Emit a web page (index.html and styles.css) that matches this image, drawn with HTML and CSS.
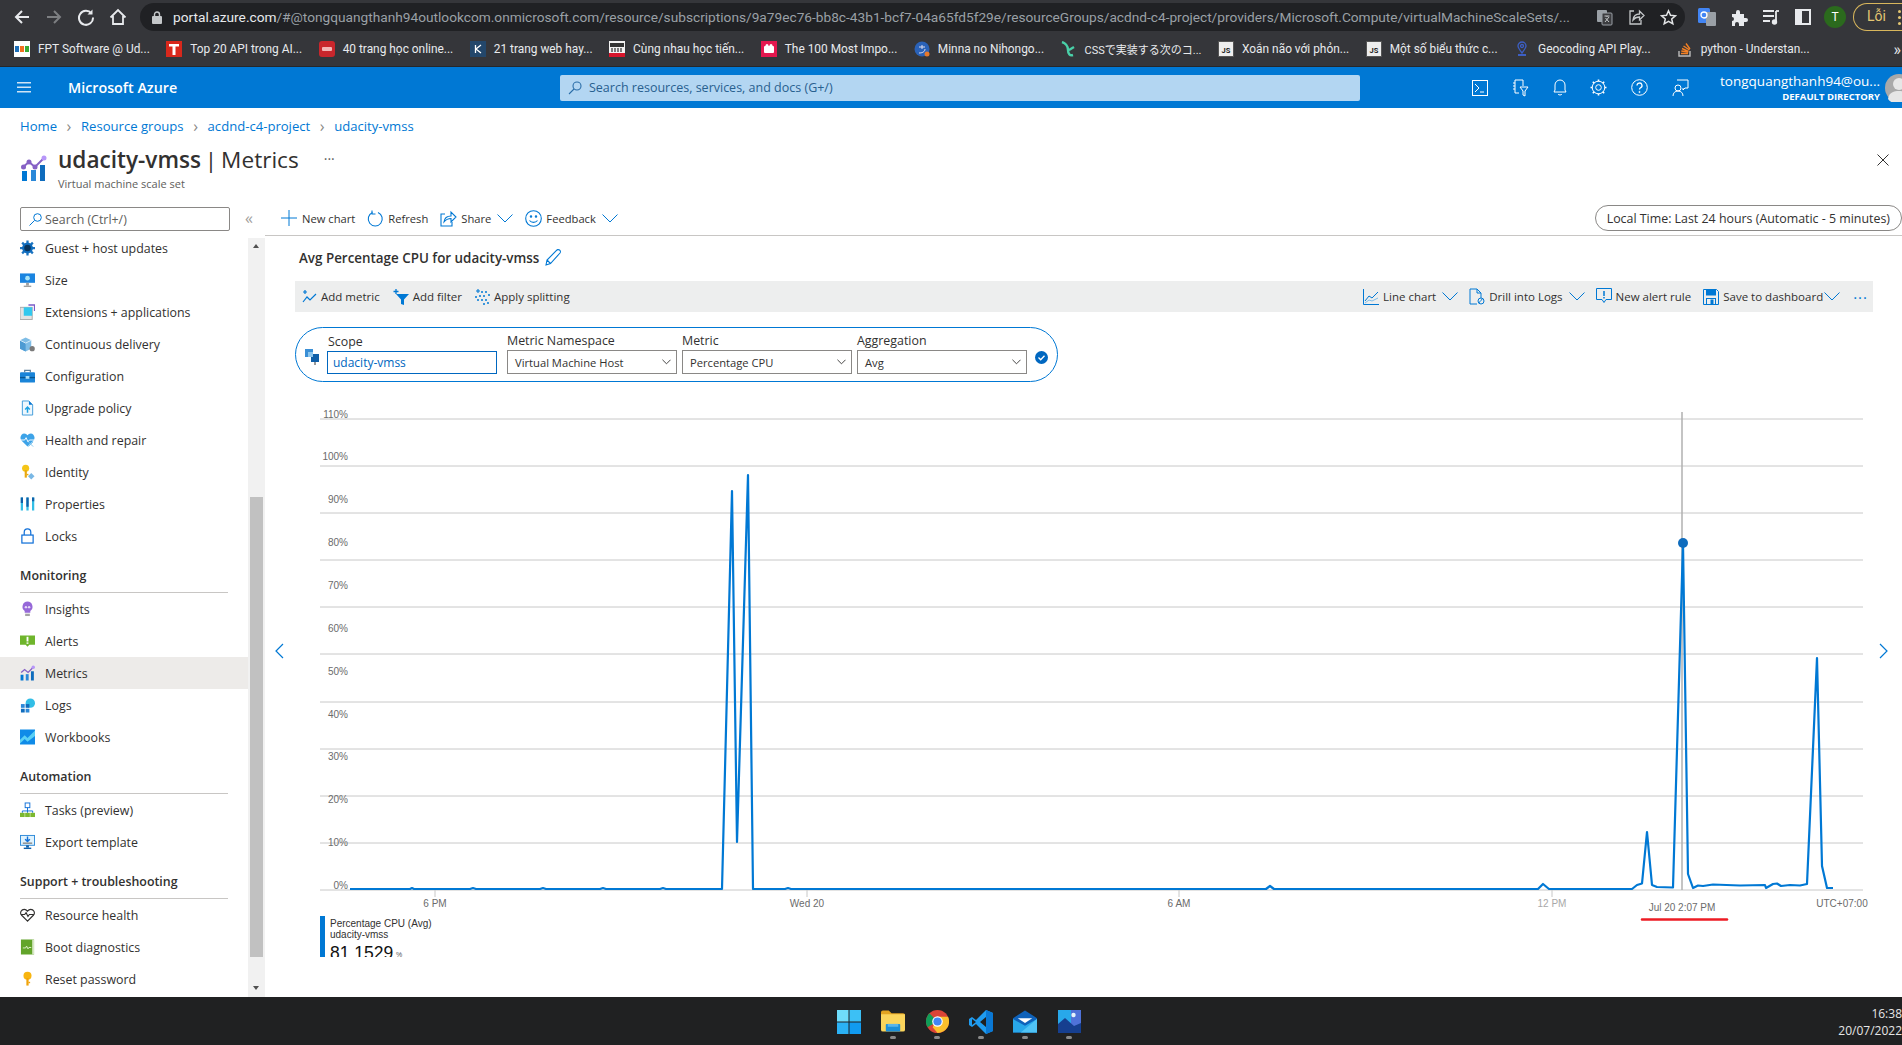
FILE: index.html
```html
<!DOCTYPE html>
<html lang="en">
<head>
    <meta charset="UTF-8">
    <title>udacity-vmss | Metrics - Microsoft Azure</title>
    <link rel="stylesheet" href="styles.css">
</head>
<body>

<!-- browser toolbar -->
<div class="browser-bar">
    <div class="nav-btn"><svg width="18" height="18" viewBox="0 0 18 18" fill="none" stroke="#e8eaed" stroke-width="2"><path d="M16 9H3M9 3 3 9l6 6"/></svg></div>
    <div class="nav-btn"><svg width="18" height="18" viewBox="0 0 18 18" fill="none" stroke="#7d7f82" stroke-width="2"><path d="M2 9h13M9 3l6 6-6 6"/></svg></div>
    <div class="nav-btn"><svg width="18" height="18" viewBox="0 0 18 18" fill="none" stroke="#e8eaed" stroke-width="2"><path d="M14.5 5.5A7 7 0 1 0 16 9.5"/><path d="M15.5 1.500v5h-5" fill="#e8eaed" stroke="none"/></svg></div>
    <div class="nav-btn"><svg width="18" height="18" viewBox="0 0 18 18" fill="none" stroke="#e8eaed" stroke-width="1.800"><path d="M1.500 9.500 9 2l7.500 7.500M4 8v8h10V8"/></svg></div>
    <div class="address">
        <svg class="lock" width="10" height="13" viewBox="0 0 10 13" fill="#c4c7c9"><rect y="5" width="10" height="8" rx="1"/><path d="M2.500 5V3.500a2.500 2.500 0 0 1 5 0V5" fill="none" stroke="#c4c7c9" stroke-width="1.400"/></svg>
        <div class="url"><span class="url-host">portal.azure.com</span>/#@tongquangthanh94outlookcom.onmicrosoft.com/resource/subscriptions/9a79ec76-bb8c-43b1-bcf7-04a65fd5f29e/resourceGroups/acdnd-c4-project/providers/Microsoft.Compute/virtualMachineScaleSets/...</div>
        <svg class="addr-icon" width="17" height="17" viewBox="0 0 17 17"><rect x="1" y="1" width="10" height="12" rx="1" fill="#9aa0a6"/><rect x="6" y="4" width="10" height="12" rx="1" fill="#3c3d40" stroke="#9aa0a6"/><path d="M8.500 7h5M11 7v1M9 13l4-5M9.500 9l3.500 4" stroke="#c4c7c9" fill="none"/></svg>
        <svg class="addr-icon" width="17" height="17" viewBox="0 0 17 17" fill="none" stroke="#c4c7c9" stroke-width="1.300"><path d="M6 2H2v13h11v-4"/><path d="M5 11c.5-4 3-6 6.500-6V2L16 6.500 11.500 11V8C9 8 6.500 9 5 11Z"/></svg>
        <svg class="addr-icon" width="17" height="17" viewBox="0 0 17 17" fill="none" stroke="#e3e5e7" stroke-width="1.500"><path d="m8.500 1.800 2 4.500 4.900.5-3.700 3.200 1.100 4.800-4.300-2.500-4.300 2.500 1.100-4.800L1.600 6.800l4.900-.5Z"/></svg>
    </div>
    <div class="ext-btn ext-first"><svg width="20" height="20" viewBox="0 0 20 20"><rect x="1" y="1" width="12" height="15" rx="1.500" fill="#4285f4"/><rect x="9" y="5" width="10" height="14" rx="1" fill="#9aa0a6"/><circle cx="7" cy="8" r="3" fill="none" stroke="#fff" stroke-width="1.300"/></svg></div>
    <div class="ext-btn"><svg width="18" height="18" viewBox="0 0 18 18" fill="#e8eaed"><path d="M2 6h4V4a2 2 0 0 1 4 0v2h4v4h2a2 2 0 0 1 0 4h-2v4H9v-2a2 2 0 0 0-4 0v2H2v-5a2 2 0 0 0 0-4Z"/></svg></div>
    <div class="ext-btn"><svg width="18" height="18" viewBox="0 0 18 18" fill="none" stroke="#e8eaed" stroke-width="1.800"><path d="M1 3h11M1 8h11M1 13h7M14 3v11"/><circle cx="12.500" cy="14" r="1.800" fill="#e8eaed"/><path d="M14 3h3"/></svg></div>
    <div class="ext-btn"><svg width="16" height="16" viewBox="0 0 16 16"><rect width="16" height="16" fill="#e8eaed"/><rect x="7" y="2" width="7" height="12" fill="#35363a"/></svg></div>
    <div class="ext-btn"><div class="profile">T</div></div>
    <div class="error-pill">Lỗi<span class="error-dots"></span></div>
</div>

<!-- bookmarks -->
<div class="bookmarks">
    <div class="bookmark"><svg class="fav" viewBox="0 0 16 16"><rect width="16" height="16" fill="#fff"/><rect x="1" y="5" width="4" height="6" fill="#1d6fb8"/><rect x="6" y="5" width="4" height="6" fill="#f37021"/><rect x="11" y="5" width="4" height="6" fill="#3aaa35"/></svg>FPT Software @ Ud...</div>
    <div class="bookmark"><svg class="fav" viewBox="0 0 16 16"><rect width="16" height="16" fill="#d8281c"/><path d="M3 3h10v2.500H9.500V14h-3V5.500H3Z" fill="#fff"/></svg>Top 20 API trong AI...</div>
    <div class="bookmark"><svg class="fav" viewBox="0 0 16 16"><rect width="16" height="16" rx="3" fill="#c9262c"/><rect x="3" y="6" width="10" height="4" rx="1" fill="#f3b5b5"/></svg>40 trang học online...</div>
    <div class="bookmark"><svg class="fav" viewBox="0 0 16 16"><rect width="16" height="16" fill="#23476b"/><path d="M5.500 4v8M11 4 6 8l5 4" fill="none" stroke="#fff" stroke-width="1.300"/></svg>21 trang web hay...</div>
    <div class="bookmark"><svg class="fav" viewBox="0 0 16 16"><rect width="16" height="16" fill="#f2f2f2"/><path d="M1 2h14v4H1Z" fill="#333"/><path d="M3 7v4M6 7v4M9 7v4M12 7v4" stroke="#555" stroke-width="1.500"/><rect y="12" width="16" height="4" fill="#d8162c"/></svg>Cùng nhau học tiến...</div>
    <div class="bookmark"><svg class="fav" viewBox="0 0 16 16"><rect width="16" height="16" fill="#e3174e"/><rect x="3" y="5" width="10" height="7" rx="1" fill="#fff"/><circle cx="6" cy="4.500" r="1.500" fill="#fff"/><circle cx="10" cy="4.500" r="1.500" fill="#fff"/></svg>The 100 Most Impo...</div>
    <div class="bookmark"><svg class="fav" viewBox="0 0 16 16"><circle cx="8" cy="8" r="7.500" fill="#2a62b8"/><circle cx="13" cy="13" r="2.500" fill="#e8792a"/><path d="M5 6h6M8 4v4M5 12c3 0 6-1 6-4" stroke="#dde" fill="none"/></svg>Minna no Nihongo...</div>
    <div class="bookmark"><svg class="fav" viewBox="0 0 16 16" fill="none" stroke="#49d0a8" stroke-width="2.400"><path d="M1 1c3 1 6 4 6 8s2 6 5 5M8 9l5-3"/></svg><span class="cjk-label">CSSで実装する次のコ...</span></div>
    <div class="bookmark"><svg class="fav" viewBox="0 0 16 16"><rect x=".5" y=".5" width="15" height="15" fill="#eee" stroke="#555"/><text x="8" y="12" class="js-mark">JS</text></svg>Xoắn não với phỏn...</div>
    <div class="bookmark"><svg class="fav" viewBox="0 0 16 16"><rect x=".5" y=".5" width="15" height="15" fill="#eee" stroke="#555"/><text x="8" y="12" class="js-mark">JS</text></svg>Một số biểu thức c...</div>
    <div class="bookmark bookmark-gap"><svg class="fav" viewBox="0 0 16 16" fill="none" stroke="#3d5fc4" stroke-width="1.300"><path d="M8 12C5 8 4 6.500 4 5a4 4 0 0 1 8 0c0 1.500-1 3-4 7Z"/><circle cx="8" cy="5" r="1.500"/><path d="M4 14h8" stroke-width="2"/></svg>Geocoding API Play...</div>
    <div class="bookmark"><svg class="fav" viewBox="0 0 16 16" fill="none" stroke-width="1.400"><path d="M2 10v5h11v-5" stroke="#bcbbbb"/><path d="M4 12.500h7M4.300 10l7 1M5 7.500l6.500 2.800M6.500 5l6 4M9 2.500l4 5.500" stroke="#f48024"/></svg>python - Understan...</div>
    <div class="more-bookmarks">»</div>
</div>

<!-- azure header -->
<header class="azure-bar">
    <svg class="hamburger" width="14" height="11" viewBox="0 0 14 11" fill="#cfe4f5"><rect width="14" height="1.500"/><rect y="4.500" width="14" height="1.500"/><rect y="9" width="14" height="1.500"/></svg>
    <div class="azure-brand">Microsoft Azure</div>
    <div class="global-search">
        <svg width="14" height="14" viewBox="0 0 14 14" fill="none" stroke="#2b6ea8" stroke-width="1.100"><circle cx="9" cy="5" r="4"/><path d="M6 8l-5 5"/></svg>
        Search resources, services, and docs (G+/)
    </div>
    <div class="azure-icons">
        <svg width="16" height="16" viewBox="0 0 16 16" fill="none" stroke="#fff"><rect x=".5" y=".5" width="15" height="15"/><path d="m3 4 4 4-4 4M8 12h4"/></svg>
        <svg width="17" height="18" viewBox="0 0 17 18" fill="none" stroke="#fff"><path d="M3 1h8v6M3 1v13h4M1 4h2M1 7h2M1 10h2M8 8h8l-3 4v5l-2-1v-4Z"/></svg>
        <svg width="14" height="17" viewBox="0 0 14 17" fill="none" stroke="#fff"><path d="M1 13h12l-1-2V6a5 5 0 0 0-10 0v5ZM5 15c.5 1.300 3.500 1.300 4 0"/></svg>
        <svg width="17" height="17" viewBox="0 0 17 17" fill="none" stroke="#fff"><circle cx="8.500" cy="8.500" r="2.800"/><circle cx="8.500" cy="8.500" r="6.300" stroke-width="1"/><path d="M8.500 .5v2M8.500 14.500v2M.5 8.500h2M14.500 8.500h2M2.800 2.800l1.500 1.500M12.700 12.700l1.500 1.500M2.800 14.200l1.500-1.500M12.700 4.300l1.500-1.500" stroke-width="1.600"/></svg>
        <svg width="17" height="17" viewBox="0 0 17 17" fill="none" stroke="#fff"><circle cx="8.500" cy="8.500" r="7.800"/><path d="M6 6.500a2.500 2.500 0 1 1 3.500 2.300c-.7.400-1 .8-1 1.700" stroke-width="1.300"/><circle cx="8.500" cy="13" r=".6"/></svg>
        <svg width="17" height="18" viewBox="0 0 17 18" fill="none" stroke="#fff"><path d="M5 1h11v8h-3l-2 2V9"/><circle cx="6" cy="9" r="3"/><path d="M1 17c0-3 2-5 5-5s5 2 5 5"/></svg>
    </div>
    <div class="account">
        <div class="account-name">tongquangthanh94@ou...</div>
        <div class="account-dir">DEFAULT DIRECTORY</div>
    </div>
    <svg class="avatar" width="28" height="28" viewBox="0 0 28 28"><circle cx="14" cy="14" r="14" fill="#a9a9a9"/><circle cx="14" cy="10" r="6" fill="#e6e6e6"/><path d="M3 25c1-7 6-8 11-8s10 1 11 8a14 14 0 0 1-22 0Z" fill="#e6e6e6"/></svg>
</header>

<nav class="breadcrumbs">
    <a>Home</a><span class="crumb-sep">›</span><a>Resource groups</a><span class="crumb-sep">›</span><a>acdnd-c4-project</a><span class="crumb-sep">›</span><a>udacity-vmss</a>
</nav>

<div class="page-title">
    <svg class="title-icon" viewBox="0 0 26 26"><path d="M2 12 8 7l6 5 9-9" fill="none" stroke="#8661c5" stroke-width="2"/><circle cx="2.500" cy="12" r="2.500" fill="#8661c5"/><circle cx="8" cy="7" r="2.500" fill="#8661c5"/><circle cx="14" cy="12" r="2.500" fill="#8661c5"/><circle cx="23" cy="3" r="2.500" fill="#b796f9"/><rect x="1" y="16" width="5" height="10" fill="#0078d4"/><rect x="10" y="15" width="5" height="11" fill="#2b88d8"/><rect x="19" y="10" width="5" height="16" fill="#0f6cbd"/></svg>
    <div class="title-text">
        <h1><b>udacity-vmss</b> | Metrics</h1>
        <div class="subtitle">Virtual machine scale set</div>
    </div>
    <div class="title-more">···</div>
    <svg class="close-x" width="12" height="12" viewBox="0 0 12 12" stroke="#323130"><path d="m.5.500 11 11M11.500.500l-11 11"/></svg>
</div>

<div class="main">
    <aside class="sidebar">
        <div class="side-search-row">
            <div class="side-search">
                <svg width="13" height="13" viewBox="0 0 13 13" fill="none" stroke="#0078d4"><circle cx="8.500" cy="4.500" r="3.800"/><path d="M5.500 7.500l-5 5"/></svg>
                Search (Ctrl+/)
            </div>
            <div class="collapse">«</div>
        </div>
        <div class="side-body">
            <div class="menu">
                <a class="menu-item"><svg class="menu-icon" viewBox="0 0 16 16"><path d="M8 0v16M0 8h16M2.300 2.300l11.400 11.400M13.700 2.300 2.300 13.700" stroke="#1a73c0" stroke-width="2.400"/><circle cx="8" cy="8" r="5.800" fill="#0f6cbd"/><circle cx="8" cy="8" r="3.500" fill="#08345c"/></svg>Guest + host updates</a>
                <a class="menu-item"><svg class="menu-icon" viewBox="0 0 16 16"><rect y="1" width="16" height="10" fill="#1a84e0"/><circle cx="8" cy="6" r="2.500" fill="#a6e4f7"/><rect x="6.500" y="11" width="3" height="3" fill="#a0a0a0"/><rect x="4" y="14" width="8" height="1.500" fill="#a0a0a0"/></svg>Size</a>
                <a class="menu-item"><svg class="menu-icon" viewBox="0 0 16 16"><rect x="0" y="3" width="13" height="13" fill="#e3e3e3" stroke="#a8a8a8"/><rect x="4" y="3" width="9" height="9" fill="#32c8ee"/><path d="M9 .500h6.500V7" fill="none" stroke="#7b5cc9" stroke-width="1.400"/></svg>Extensions + applications</a>
                <a class="menu-item"><svg class="menu-icon" viewBox="0 0 16 16"><path d="M0 4l6-3 6 3v9l-6 3-6-3Z" fill="#7fbde6"/><path d="M6 7v9L0 13V4Z" fill="#4d9bd3"/><path d="M0 4l6 3 6-3" fill="none" stroke="#d7ecfa"/><circle cx="13" cy="13" r="2.800" fill="#7a7a7a"/></svg>Continuous delivery</a>
                <a class="menu-item"><svg class="menu-icon" viewBox="0 0 16 16"><rect y="4" width="16" height="11" rx="1" fill="#1a84d8"/><rect y="9" width="16" height="1.400" fill="#0a568f"/><path d="M5 4V2h6v2" fill="none" stroke="#5c7f9c" stroke-width="1.300"/><rect x="6" y="8" width="4" height="3" fill="#a7dcf6"/></svg>Configuration</a>
                <a class="menu-item"><svg class="menu-icon" viewBox="0 0 16 16"><path d="M2.500.500h7l4 4v11h-11Z" fill="#eef7fd" stroke="#3d9ad9"/><path d="M9.500.500v4h4" fill="#0a78d4"/><path d="M8 13V8M5.500 9.500 8 7l2.500 2.500" stroke="#1ba1e2" fill="none" stroke-width="1.600"/></svg>Upgrade policy</a>
                <a class="menu-item"><svg class="menu-icon" viewBox="0 0 16 16"><path d="M8 15 1.500 8.500C-1 5.500 1.500 1 4.500 1 6 1 7.300 2 8 3c.7-1 2-2 3.500-2 3 0 5.500 4.500 3 7.500Z" fill="#3da3e8"/><path d="M1 8h4l1.500-2.500L8.500 10l1.500-2h5" fill="none" stroke="#fff"/><path d="m9 10 5 5M14 10l-5 5" stroke="#7cc4ee"/></svg>Health and repair</a>
                <a class="menu-item"><svg class="menu-icon" viewBox="0 0 16 16"><circle cx="6" cy="4" r="3.800" fill="#f5c518"/><rect x="5" y="6" width="2.300" height="8" fill="#e8a80f"/><rect x="7" y="10" width="2" height="1.500" fill="#e8a80f"/><path d="m12 9 3.500 3.500L12 16l-3.500-3.500Z" fill="#7ab8e5"/></svg>Identity</a>
                <a class="menu-item"><svg class="menu-icon" viewBox="0 0 16 16"><path d="M2 1v14M8 1v14M14 1v14" stroke="#32bee6" stroke-width="2.400"/><path d="M2 1v6M8 1v10M14 1v4" stroke="#0f5fa8" stroke-width="2.400"/></svg>Properties</a>
                <a class="menu-item"><svg class="menu-icon" viewBox="0 0 16 16" fill="none" stroke="#0f6fd8" stroke-width="1.300"><rect x="2" y="7" width="12" height="8.500"/><path d="M4.500 7V4a3.500 3.500 0 0 1 7 0v3"/></svg>Locks</a>
            </div>
            <div class="menu-section">Monitoring</div>
            <div class="menu">
                <a class="menu-item"><svg class="menu-icon" viewBox="0 0 16 16"><path d="M8 0a5.500 5.500 0 0 1 3 10v2H5v-2A5.500 5.500 0 0 1 8 0Z" fill="#9668d8"/><rect x="5.500" y="13" width="5" height="2.500" fill="#a3a3a3"/><circle cx="6.300" cy="6" r="1.300" fill="#e5d8f7"/><circle cx="9.700" cy="6" r="1.300" fill="#e5d8f7"/></svg>Insights</a>
                <a class="menu-item"><svg class="menu-icon" viewBox="0 0 16 16"><path d="M0 2h16v10h-6l-2 2-2-2H0Z" fill="#6fb52c"/><rect x="7" y="3.500" width="2" height="5" fill="#fff"/><rect x="7" y="9.500" width="2" height="1.500" fill="#fff"/></svg>Alerts</a>
                <a class="menu-item active"><svg class="menu-icon" viewBox="0 0 26 26"><path d="M2 12 8 7l6 5 9-9" fill="none" stroke="#8661c5" stroke-width="2.400"/><circle cx="23" cy="3" r="3" fill="#b796f9"/><rect x="1" y="16" width="5" height="10" fill="#0078d4"/><rect x="10" y="15" width="5" height="11" fill="#2b88d8"/><rect x="19" y="10" width="5" height="16" fill="#0f6cbd"/></svg>Metrics</a>
                <a class="menu-item"><svg class="menu-icon" viewBox="0 0 16 16"><circle cx="11" cy="6" r="5" fill="#32bee6"/><rect x="1" y="7" width="4" height="4" fill="#2b88d8"/><rect x="6" y="7" width="4" height="4" fill="#0f6cbd"/><rect x="1" y="12" width="4" height="4" fill="#0f6cbd"/><rect x="6" y="12" width="4" height="4" fill="#2b88d8"/></svg>Logs</a>
                <a class="menu-item"><svg class="menu-icon" viewBox="0 0 16 16"><rect width="16" height="16" fill="#0f8be8"/><path d="M0 11 5 6l3 3 8-8v6l-8 6-3-3-5 5Z" fill="#5ad0f5"/></svg>Workbooks</a>
            </div>
            <div class="menu-section">Automation</div>
            <div class="menu">
                <a class="menu-item"><svg class="menu-icon" viewBox="0 0 16 16"><rect x="5.500" y=".5" width="5" height="5" fill="#fff" stroke="#0f6fd8"/><path d="M8 5.500V9M2.500 11V9h11v2M8 9v2" fill="none" stroke="#0f6fd8"/><rect y="11" width="5" height="4.500" fill="#7cb82f"/><rect x="5.500" y="11" width="5" height="4.500" fill="#7cb82f"/><rect x="11" y="11" width="5" height="4.500" fill="#7cb82f"/></svg>Tasks (preview)</a>
                <a class="menu-item"><svg class="menu-icon" viewBox="0 0 16 16"><rect x=".5" y="1" width="15" height="10.500" fill="#dff2fd" stroke="#2b88d8"/><path d="M8 2v5M5.500 5 8 7.500 10.500 5" fill="none" stroke="#0f6fd8" stroke-width="1.500"/><rect x="3" y="8.500" width="10" height="1.500" fill="#8a8a8a"/><rect x="6.500" y="11.500" width="3" height="2.500" fill="#0f5fa8"/><rect x="4" y="14" width="8" height="1.500" fill="#0f5fa8"/></svg>Export template</a>
            </div>
            <div class="menu-section">Support + troubleshooting</div>
            <div class="menu">
                <a class="menu-item"><svg class="menu-icon" viewBox="0 0 16 16" fill="none" stroke="#323130" stroke-width="1.200"><path d="M8 14.500 1.500 8C-.5 5.500 1.500 2 4.500 2 6 2 7.300 3 8 4c.7-1 2-2 3.500-2 3 0 5 3.500 3 6Z"/><path d="M1 7.500h4l1.500-2 2 4 1.500-2h5"/></svg>Resource health</a>
                <a class="menu-item"><svg class="menu-icon" viewBox="0 0 16 16"><rect x="1" y="0" width="14" height="16" fill="#62a42a"/><rect x="13" y="0" width="2" height="16" fill="#d7e8c5"/><path d="M3 9h3l1-2 1.500 3 1-1.500H12" fill="none" stroke="#dff0cc"/></svg>Boot diagnostics</a>
                <a class="menu-item"><svg class="menu-icon" viewBox="0 0 16 16"><circle cx="8" cy="4.500" r="4.300" fill="#f8b510"/><rect x="6.800" y="7" width="2.400" height="8" fill="#f0a30a"/><rect x="9" y="11" width="1.800" height="1.500" fill="#f0a30a"/></svg>Reset password</a>
            </div>
        </div>
        <div class="scrollbar">
            <div class="scroll-up"></div>
            <div class="scroll-track"><div class="scroll-thumb"></div></div>
            <div class="scroll-down"></div>
        </div>
    </aside>

    <section class="content">
        <div class="command-bar">
            <div class="cmd"><svg width="16" height="16" viewBox="0 0 16 16" stroke="#0078d4"><path d="M8 0v16M0 8h16"/></svg><span class="cmd-gap">New chart</span></div>
            <div class="cmd"><svg width="17" height="17" viewBox="0 0 17 17" fill="none" stroke="#0078d4" stroke-width="1.100"><path d="M11 2.500a7 7 0 1 1-5.500 0"/><path d="M5 .5v3.500h3.500"/></svg>Refresh</div>
            <div class="cmd"><svg width="17" height="17" viewBox="0 0 17 17" fill="none" stroke="#0078d4" stroke-width="1.100"><path d="M5 4H1v12h11v-4"/><path d="M4 12c.5-4 3-6 7-6V2l5 5-5 5V8.500c-3 0-5 1-7 3.500Z"/></svg>Share<svg class="chev" viewBox="0 0 16 9"><path d="m.5.500 7.500 7.500L15.500.500"/></svg></div>
            <div class="cmd"><svg width="17" height="17" viewBox="0 0 17 17" fill="none" stroke="#0078d4" stroke-width="1.100"><circle cx="8.500" cy="8.500" r="7.800"/><circle cx="6" cy="6.500" r=".7"/><circle cx="11" cy="6.500" r=".7"/><path d="M4.500 10.500c2 2.500 6 2.500 8 0"/></svg>Feedback<svg class="chev" viewBox="0 0 16 9"><path d="m.5.500 7.500 7.500L15.500.500"/></svg></div>
            <div class="time-pill">Local Time: Last 24 hours (Automatic - 5 minutes)</div>
        </div>

        <div class="chart-title">Avg Percentage CPU for udacity-vmss
            <svg width="18" height="18" viewBox="0 0 18 18" fill="none" stroke="#0078d4" stroke-width="1.100"><path d="M2 16l1-5L12.500 1.500a1.800 1.800 0 0 1 3.500 2.500L6.500 14.500ZM3 11l3.500 3.500"/></svg>
        </div>

        <div class="chart-toolbar">
            <div class="tool"><svg width="15" height="15" viewBox="0 0 15 15" fill="none" stroke="#0078d4" stroke-width="1.200"><path d="M1 13l4-5 3 3 6-6"/><path d="M3 1v4M1 3h4"/></svg>Add metric</div>
            <div class="tool tool-wide"><svg width="16" height="16" viewBox="0 0 16 16" fill="#0078d4"><path d="M3 5h13l-5 5.500V16l-3-1v-4.500Z"/><path d="M3 0v5M.5 2.500h5" stroke="#0078d4" fill="none" stroke-width="1.300"/></svg>Add filter</div>
            <div class="tool tool-wide"><svg width="15" height="16" viewBox="0 0 15 16" fill="#0078d4"><path d="M3 0v4M1 2h4" stroke="#0078d4" stroke-width="1.100"/><circle cx="7" cy="3" r="1"/><circle cx="11" cy="3" r="1"/><circle cx="14" cy="6" r="1"/><circle cx="5" cy="7" r="1"/><circle cx="9" cy="7" r="1"/><circle cx="3" cy="11" r="1"/><circle cx="7" cy="11" r="1"/><circle cx="11" cy="11" r="1"/><circle cx="9" cy="15" r="1"/><circle cx="13" cy="14" r="1"/><circle cx="1" cy="8" r="1"/></svg>Apply splitting</div>
            <div class="tool-spacer"></div>
            <div class="tool"><svg width="16" height="16" viewBox="0 0 16 16" fill="none" stroke="#0078d4"><path d="M.5 0v15.500H16"/><path d="M2 12l4-5 3 2 6-6"/><path d="M2 14l4-3 3 1 6-3" stroke="#7fbde6"/></svg>Line chart<svg class="chev" viewBox="0 0 16 9"><path d="m.5.500 7.500 7.500L15.500.500"/></svg></div>
            <div class="tool"><svg width="16" height="17" viewBox="0 0 16 17" fill="none" stroke="#0078d4"><path d="M8 16H1V1h7l4 4v5M8 1v4h4"/><circle cx="12" cy="13" r="3"/><path d="M10 15c0-2 3-2 3-4"/></svg>Drill into Logs<svg class="chev" viewBox="0 0 16 9"><path d="m.5.500 7.500 7.500L15.500.500"/></svg></div>
            <div class="tool"><svg width="16" height="17" viewBox="0 0 16 17" fill="none" stroke="#0078d4"><path d="M.5.500h15v11H10l-2 3-2-3H.5Z"/><path d="M8 3v5M8 9v1.500" stroke-width="1.500"/></svg>New alert rule</div>
            <div class="tool tool-save"><svg width="16" height="16" viewBox="0 0 16 16" fill="none" stroke="#0078d4"><path d="M.5.500h13l2 2v13H.5Z"/><rect x="3.500" y="1" width="9" height="5" fill="#0078d4"/><rect x="3.500" y="9.500" width="9" height="6"/><rect x="8" y="11" width="2" height="4" fill="#0078d4"/></svg>Save to dashboard<svg class="chev save-chev" viewBox="0 0 16 9"><path d="m.5.500 7.500 7.500L15.500.500"/></svg></div>
            <div class="tool-more">···</div>
        </div>

        <div class="metric-pill">
            <svg class="scope-icon" width="15" height="17" viewBox="0 0 15 17"><rect x="0" y="0" width="8" height="8" fill="#3a8fd6"/><rect x="6" y="5" width="8" height="8" fill="#0f5fa8"/><rect x="3" y="3" width="5" height="5" fill="#8cc6ee"/><rect x="9" y="13" width="2" height="3" fill="#9a9a9a"/></svg>
            <div class="field">
                <label class="field-scope">Scope</label>
                <div class="input-scope">udacity-vmss</div>
            </div>
            <div class="field">
                <label>Metric Namespace</label>
                <div class="select">Virtual Machine Host<svg viewBox="0 0 10 6"><path d="m.5.500 4.500 4.500L9.500.500"/></svg></div>
            </div>
            <div class="field">
                <label>Metric</label>
                <div class="select">Percentage CPU<svg viewBox="0 0 10 6"><path d="m.5.500 4.500 4.500L9.500.500"/></svg></div>
            </div>
            <div class="field">
                <label>Aggregation</label>
                <div class="select">Avg<svg viewBox="0 0 10 6"><path d="m.5.500 4.500 4.500L9.500.500"/></svg></div>
            </div>
            <svg class="check" width="13" height="13" viewBox="0 0 13 13"><circle cx="6.500" cy="6.500" r="6.500" fill="#0067c0"/><path d="m3.500 6.500 2.200 2.200 3.800-4" fill="none" stroke="#fff" stroke-width="1.300"/></svg>
        </div>

        <!-- chart: viewBox is in page pixels so the plot reads like the screen -->
        <svg class="chart" viewBox="265 382 1637 615">
            <defs><clipPath id="legend-clip"><rect x="318" y="914" width="200" height="43"/></clipPath></defs>
            <g class="grid">
                <path d="M320 419H1863M320 466H1863M320 513H1863M320 560H1863M320 607H1863M320 654H1863M320 702H1863M320 749H1863M320 796H1863M320 843H1863M320 890H1863"/>
                <path d="M435 890v7M807 890v7M1179 890v7M1552 890v7"/>
            </g>
            <g class="y-labels">
                <text x="348" y="418">110%</text>
                <text x="348" y="460">100%</text>
                <text x="348" y="503">90%</text>
                <text x="348" y="546">80%</text>
                <text x="348" y="589">70%</text>
                <text x="348" y="632">60%</text>
                <text x="348" y="675">50%</text>
                <text x="348" y="718">40%</text>
                <text x="348" y="760">30%</text>
                <text x="348" y="803">20%</text>
                <text x="348" y="846">10%</text>
                <text x="348" y="889">0%</text>
            </g>
            <g class="x-labels">
                <text x="435" y="907">6 PM</text>
                <text x="807" y="907">Wed 20</text>
                <text x="1179" y="907">6 AM</text>
                <text x="1552" y="907" class="x-faded">12 PM</text>
                <text x="1842" y="907">UTC+07:00</text>
            </g>
            <path class="cursor" d="M1682 412V890"/>
            <polyline class="series" points="350,889 410,889 412,888 414,889 470,889 473,888 476,889 540,889 543,888 546,889 600,889 603,888 606,889 660,889 663,888 666,889 722,889 732,491 737,842 748,475 753,889 785,889 788,888 791,889 1000,889 1100,889 1200,889 1266,889 1270,886 1274,889 1400,889 1500,889 1538,889 1543,884 1549,889 1632,889 1637,885 1642,883.500 1647,832 1652,885 1657,887 1673,887.500 1683,543 1688,874 1693,888 1698,885.500 1703,886 1713,884.500 1740,885.500 1765,885 1766,888 1773,884 1777,883.500 1781,886 1790,885 1800,885.500 1807,884 1817,658 1822,866 1827,888 1833,888"/>
            <circle cx="1683" cy="543" r="5" fill="#0f6cbd"/>
            <text class="hover-label" x="1682" y="911">Jul 20 2:07 PM</text>
            <path d="M1642 919.500H1727" stroke="#ed1c24" stroke-width="2.500" stroke-linecap="round"/>
            <g clip-path="url(#legend-clip)">
                <rect x="320" y="916" width="5" height="41" fill="#0078d4"/>
                <text class="legend-name" x="330" y="927">Percentage CPU (Avg)</text>
                <text class="legend-res" x="330" y="938">udacity-vmss</text>
                <text class="legend-value" x="330" y="959">81.1529</text>
                <text class="legend-unit" x="396" y="957">%</text>
            </g>
            <path class="pager" d="M283 644l-7 7 7 7M1880 644l7 7-7 7"/>
        </svg>
    </section>
</div>

<footer class="taskbar">
    <div class="task-icons">
        <div class="task-item"><svg width="24" height="24" viewBox="0 0 24 24"><rect width="11.500" height="11.500" fill="#6fdcfa"/><rect x="12.500" width="11.500" height="11.500" fill="#3cc0f5"/><rect y="12.500" width="11.500" height="11.500" fill="#2bb2f5"/><rect x="12.500" y="12.500" width="11.500" height="11.500" fill="#119bf0"/></svg></div>
        <div class="task-item running"><svg width="25" height="22" viewBox="0 0 25 22"><path d="M0 2a2 2 0 0 1 2-2h6l3 3h12a2 2 0 0 1 2 2v3H0Z" fill="#e3a421"/><path d="M0 4h25v16a2 2 0 0 1-2 2H2a2 2 0 0 1-2-2Z" fill="#fbd55c"/><rect x="5" y="14" width="15" height="8" rx="1" fill="#1c8fd8"/><rect x="7" y="14" width="11" height="3" fill="#5bb5ea"/></svg></div>
        <div class="task-item running"><svg width="23" height="23" viewBox="0 0 24 24"><circle cx="12" cy="12" r="12" fill="#db4437"/><path d="M12 12 1.600 18A12 12 0 0 1 3.500 3.500Z" fill="#0f9d58"/><path d="M12 24A12 12 0 0 0 23 7H12l-5 11Z" fill="#fbc02d"/><circle cx="12" cy="12" r="5.500" fill="#fff"/><circle cx="12" cy="12" r="4.300" fill="#4285f4"/></svg></div>
        <div class="task-item running"><svg width="24" height="24" viewBox="0 0 24 24"><path d="M17 0 24 3v18l-7 3L7 14l-4 3-3-2v-6l3-2 4 3Z" fill="#1f9cf0"/><path d="M17 0 24 3v18l-7 3Z" fill="#0a78d4"/><path d="m3 9 4 3-4 3Zm14-2-6 5 6 5Z" fill="#202020"/></svg></div>
        <div class="task-item running"><svg width="25" height="23" viewBox="0 0 25 23"><path d="M12.500 0 25 8v15H0V8Z" fill="#0f62ba"/><path d="M5 8h15l-7.500 5Z" fill="#fff"/><path d="M0 9l12.500 7L25 9v14H0Z" fill="#28a8ea"/><path d="M25 9v14H8Z" fill="#50c3f5"/></svg></div>
        <div class="task-item running"><svg width="23" height="23" viewBox="0 0 23 23"><rect width="23" height="23" fill="#28a8ea"/><rect x="13" width="10" height="23" fill="#4f72d8"/><circle cx="15.500" cy="5" r="2.200" fill="#e5f3fb"/><path d="M0 23V14l7-6 9 8 7-3v10Z" fill="#163f8f"/></svg></div>
    </div>
    <div class="clock"><div>16:38</div><div>20/07/2022</div></div>
</footer>

</body>
</html>
```

FILE: styles.css
```css
* {
    padding: 0;
    margin: 0;
    box-sizing: border-box;
}

html, body {
    width: 1902px;
    height: 1045px;
    overflow: hidden;
}

body {
    display: flex;
    flex-direction: column;
    background: white;
    color: #323130;
    font-family: "Open Sans", "Noto Sans CJK JP", sans-serif;
    font-size: 12px;
}

a {
    color: inherit;
    text-decoration: none;
}

/* browser chrome */
.browser-bar {
    height: 32px;
    padding: 3px 0 1px 6px;
    display: flex;
    align-items: center;
    background: #35363a;
    font-family: Roboto, sans-serif;
}

.nav-btn {
    width: 32px;
    flex: none;
    display: flex;
    justify-content: center;
}

.address {
    width: 1545px;
    height: 28px;
    flex: none;
    margin-left: 6px;
    padding: 0 10px 0 12px;
    display: flex;
    align-items: center;
    background: #202124;
    border-radius: 14px;
    color: #9aa0a6;
    font-size: 13.700px;
}

.lock {
    flex: none;
}

.url {
    width: 1412px;
    flex: none;
    margin: 0 11px;
    white-space: nowrap;
    overflow: hidden;
}

.url-host {
    color: #e8eaed;
}

.addr-icon {
    flex: none;
    margin-right: 15px;
}

.ext-btn {
    width: 32px;
    display: flex;
    justify-content: center;
    flex: none;
}

.ext-first {
    margin-left: 6px;
}

.profile {
    width: 22px;
    height: 22px;
    border-radius: 50%;
    background: #2b6a1d;
    color: white;
    font-size: 12px;
    text-align: center;
    line-height: 22px;
}

.error-pill {
    width: 49px;
    height: 28px;
    margin-left: 2px;
    padding-left: 13px;
    flex: none;
    border: 1px solid #d8b65c;
    border-radius: 14px 0 0 14px;
    border-right: 0;
    color: #e3c672;
    font-size: 14px;
    line-height: 25px;
    position: relative;
}

.error-dots {
    position: absolute;
    left: 44px;
    top: 6px;
    width: 3px;
    height: 3px;
    background: #e3c672;
    box-shadow: 0 6px 0 #e3c672, 0 12px 0 #e3c672;
    border-radius: 50%;
}

.bookmarks {
    height: 35px;
    padding-left: 14px;
    display: flex;
    align-items: center;
    background: #35363a;
    border-bottom: 1px solid #26272a;
    color: #e8eaed;
    font-family: Roboto, "Noto Sans CJK JP", sans-serif;
    font-size: 11.900px;
}

.bookmark {
    display: flex;
    align-items: center;
    gap: 8px;
    margin-right: 16.500px;
    white-space: nowrap;
}

.bookmark-gap {
    margin-right: 26px;
}

.cjk-label {
    font-size: 11px;
}

.fav {
    width: 16px;
    height: 16px;
    flex: none;
}

.js-mark {
    font-size: 7.500px;
    font-weight: 700;
    text-anchor: middle;
    fill: #222;
}

.more-bookmarks {
    margin-left: auto;
    margin-right: 1px;
    font-size: 16px;
}

/* azure header */
.azure-bar {
    height: 41px;
    display: flex;
    align-items: center;
    background: #0078d4;
    color: white;
}

.hamburger {
    margin-left: 17px;
    flex: none;
}

.azure-brand {
    width: 492px;
    flex: none;
    margin-left: 37px;
    font-size: 14.300px;
    font-weight: 600;
    white-space: nowrap;
}

.global-search {
    width: 800px;
    height: 26px;
    padding-left: 8px;
    flex: none;
    display: flex;
    align-items: center;
    gap: 7px;
    background: #b3d6f2;
    border-radius: 2px;
    color: #28608f;
    font-size: 12.500px;
}

.azure-icons {
    width: 217px;
    margin-left: 112px;
    flex: none;
    display: flex;
    justify-content: space-between;
    align-items: center;
}

.account {
    width: 191px;
    flex: none;
    margin-right: 5px;
    text-align: right;
    white-space: nowrap;
}

.account-name {
    font-size: 13.500px;
    line-height: 17px;
}

.account-dir {
    font-size: 9.500px;
    font-weight: 700;
    line-height: 13px;
}

.avatar {
    flex: none;
}

/* page heading */
.breadcrumbs {
    height: 36px;
    padding-left: 20px;
    display: flex;
    align-items: center;
    color: #0078d4;
    font-size: 13.100px;
}

.crumb-sep {
    width: 24px;
    color: #8a8886;
    font-size: 16px;
    text-align: center;
}

.page-title {
    height: 56px;
    padding: 0 13px 0 21px;
    display: flex;
    align-items: flex-start;
}

.title-icon {
    width: 26px;
    height: 26px;
    margin-top: 11px;
    margin-right: 11px;
    flex: none;
}

.title-text h1 {
    font-size: 22.600px;
    font-weight: 400;
    line-height: 32px;
    word-spacing: -2px;
    white-space: nowrap;
}

.title-text h1 b {
    font-weight: 600;
}

.subtitle {
    color: #605e5c;
    font-size: 11px;
    line-height: 16px;
}

.title-more {
    margin-left: 25px;
    margin-top: 5px;
    color: #605e5c;
    font-size: 14px;
}

.close-x {
    margin-left: auto;
    margin-top: 10px;
}

.main {
    flex: 1;
    min-height: 0;
    display: flex;
}

/* left menu */
.sidebar {
    width: 265px;
    flex: none;
    position: relative;
    overflow: hidden;
    font-size: 12.400px;
}

.side-search-row {
    height: 32px;
    padding: 7px 0 0 20px;
    display: flex;
    align-items: flex-start;
}

.side-search {
    width: 210px;
    height: 24px;
    padding-left: 8px;
    display: flex;
    align-items: center;
    gap: 3px;
    border: 1px solid #8a8886;
    border-radius: 2px;
    color: #605e5c;
}

.collapse {
    margin-left: 15px;
    color: #a19f9d;
    font-size: 16px;
    line-height: 22px;
}

.side-body {
    width: 248px;
}

.menu-item {
    height: 32px;
    padding-left: 20px;
    display: flex;
    align-items: center;
    gap: 10px;
    white-space: nowrap;
}

.menu-item.active {
    background: #edebe9;
}

.menu-icon {
    width: 15px;
    height: 16px;
    flex: none;
}

.menu-section {
    height: 41px;
    margin: 0 20px;
    padding-bottom: 8px;
    display: flex;
    align-items: flex-end;
    border-bottom: 1px solid #c8c6c4;
    font-weight: 600;
}

.scrollbar {
    position: absolute;
    top: 38px;
    right: 0;
    width: 17px;
    bottom: 0;
    display: flex;
    flex-direction: column;
    background: #f1f1f1;
}

.scroll-up, .scroll-down {
    height: 17px;
    flex: none;
    position: relative;
}

.scroll-up::after, .scroll-down::after {
    content: "";
    position: absolute;
    left: 5px;
    top: 6px;
    border-left: 3.500px solid transparent;
    border-right: 3.500px solid transparent;
}

.scroll-up::after {
    border-bottom: 4px solid #505050;
}

.scroll-down::after {
    border-top: 4px solid #505050;
}

.scroll-track {
    flex: 1;
    padding: 242px 2px 23px;
    display: flex;
}

.scroll-thumb {
    flex: 1;
    background: #c1c1c1;
}

/* right side */
.content {
    flex: 1;
    min-width: 0;
    display: flex;
    flex-direction: column;
}

.command-bar {
    height: 36px;
    padding-left: 16px;
    padding-top: 2px;
    display: flex;
    align-items: center;
    gap: 12px;
    border-bottom: 1px solid #c8c6c4;
    font-size: 11.200px;
    white-space: nowrap;
}

.cmd {
    display: flex;
    align-items: center;
    gap: 4px;
}

.cmd-gap {
    margin-left: 1px;
}

.chev {
    width: 16px;
    height: 9px;
    margin-left: 2px;
    fill: none;
    stroke: #0078d4;
}

.time-pill {
    height: 26px;
    margin-left: auto;
    padding: 0 11px;
    display: flex;
    align-items: center;
    border: 1px solid #8a8886;
    border-radius: 13px;
    font-size: 12.400px;
}

.chart-title {
    height: 45px;
    padding: 0 0 1px 34px;
    display: flex;
    align-items: center;
    gap: 5px;
    font-size: 13.400px;
    font-weight: 600;
}

.chart-toolbar {
    height: 32px;
    margin: 0 29px 0 30px;
    padding: 1px 5px 0 7px;
    display: flex;
    align-items: center;
    gap: 11px;
    background: #edeeee;
    font-size: 11.500px;
    white-space: nowrap;
}

.tool {
    display: flex;
    align-items: center;
    gap: 4px;
}

.tool-wide {
    margin-left: 2px;
}

.tool-spacer {
    flex: 1;
}

.tool-save {
    margin-left: 1px;
}

.save-chev {
    margin-left: -3px;
}

.tool-more {
    margin-left: 2px;
    color: #0078d4;
    font-size: 15px;
    letter-spacing: 1px;
}

.metric-pill {
    width: 763px;
    height: 55px;
    margin: 15px 0 0 30px;
    padding: 5px 0 0 9px;
    display: flex;
    align-items: flex-start;
    gap: 5px;
    border: 1px solid #0078d4;
    border-radius: 28px;
}

.scope-icon {
    margin-top: 16px;
    margin-right: 2px;
}

.field {
    width: 170px;
}

.field:nth-of-type(2) {
    margin-left: 5px;
}

.field label {
    display: block;
    height: 17px;
    line-height: 15px;
    font-size: 12.400px;
}

.field label.field-scope {
    height: 18px;
    margin-left: 1px;
    line-height: 18px;
}

.input-scope {
    height: 23px;
    padding-left: 5px;
    line-height: 21px;
    border: 1px solid #0067c0;
    color: #0067c0;
}

.select {
    height: 24px;
    padding: 0 5px 0 7px;
    display: flex;
    align-items: center;
    justify-content: space-between;
    border: 1px solid #8a8886;
    font-size: 11.200px;
}

.select svg {
    width: 9px;
    height: 6px;
    fill: none;
    stroke: #323130;
}

.check {
    margin-left: 3px;
    margin-top: 18px;
}

/* chart */
.chart {
    width: 1637px;
    height: 615px;
    flex: none;
    font-family: "Liberation Sans", sans-serif;
}

.grid path {
    fill: none;
    stroke: #c8c8c8;
}

.y-labels text {
    fill: #6b6b6b;
    font-size: 10px;
    text-anchor: end;
}

.x-labels text {
    fill: #6b6b6b;
    font-size: 10px;
    text-anchor: middle;
}

.x-labels .x-faded {
    fill: #a8a8a8;
}

.cursor {
    stroke: #b0b0b0;
    stroke-width: 1.500;
}

.series {
    fill: none;
    stroke: #0078d4;
    stroke-width: 2.200;
    stroke-linejoin: round;
}

.hover-label {
    fill: #6b6b6b;
    font-size: 10px;
    text-anchor: middle;
}

.legend-name, .legend-res {
    fill: #323130;
    font-size: 10px;
}

.legend-value {
    fill: #111;
    font-size: 17.500px;
}

.legend-unit {
    fill: #555;
    font-size: 7px;
}

.pager {
    fill: none;
    stroke: #0078d4;
    stroke-width: 1.200;
}

/* windows taskbar */
.taskbar {
    height: 48px;
    flex: none;
    padding-left: 837px;
    display: flex;
    align-items: center;
    background: #202122;
    position: relative;
}

.task-icons {
    display: flex;
    gap: 20px;
}

.task-item {
    width: 24px;
    height: 24px;
    margin-top: 2px;
    display: flex;
    justify-content: center;
    position: relative;
}

.task-item.running::after {
    content: "";
    position: absolute;
    left: 9px;
    bottom: -5px;
    width: 6px;
    height: 3px;
    border-radius: 2px;
    background: #8a8a8a;
}

.clock {
    position: absolute;
    right: 0;
    top: 8px;
    color: #e6e6e6;
    font-size: 12px;
    line-height: 17px;
    text-align: right;
    white-space: nowrap;
}
```
